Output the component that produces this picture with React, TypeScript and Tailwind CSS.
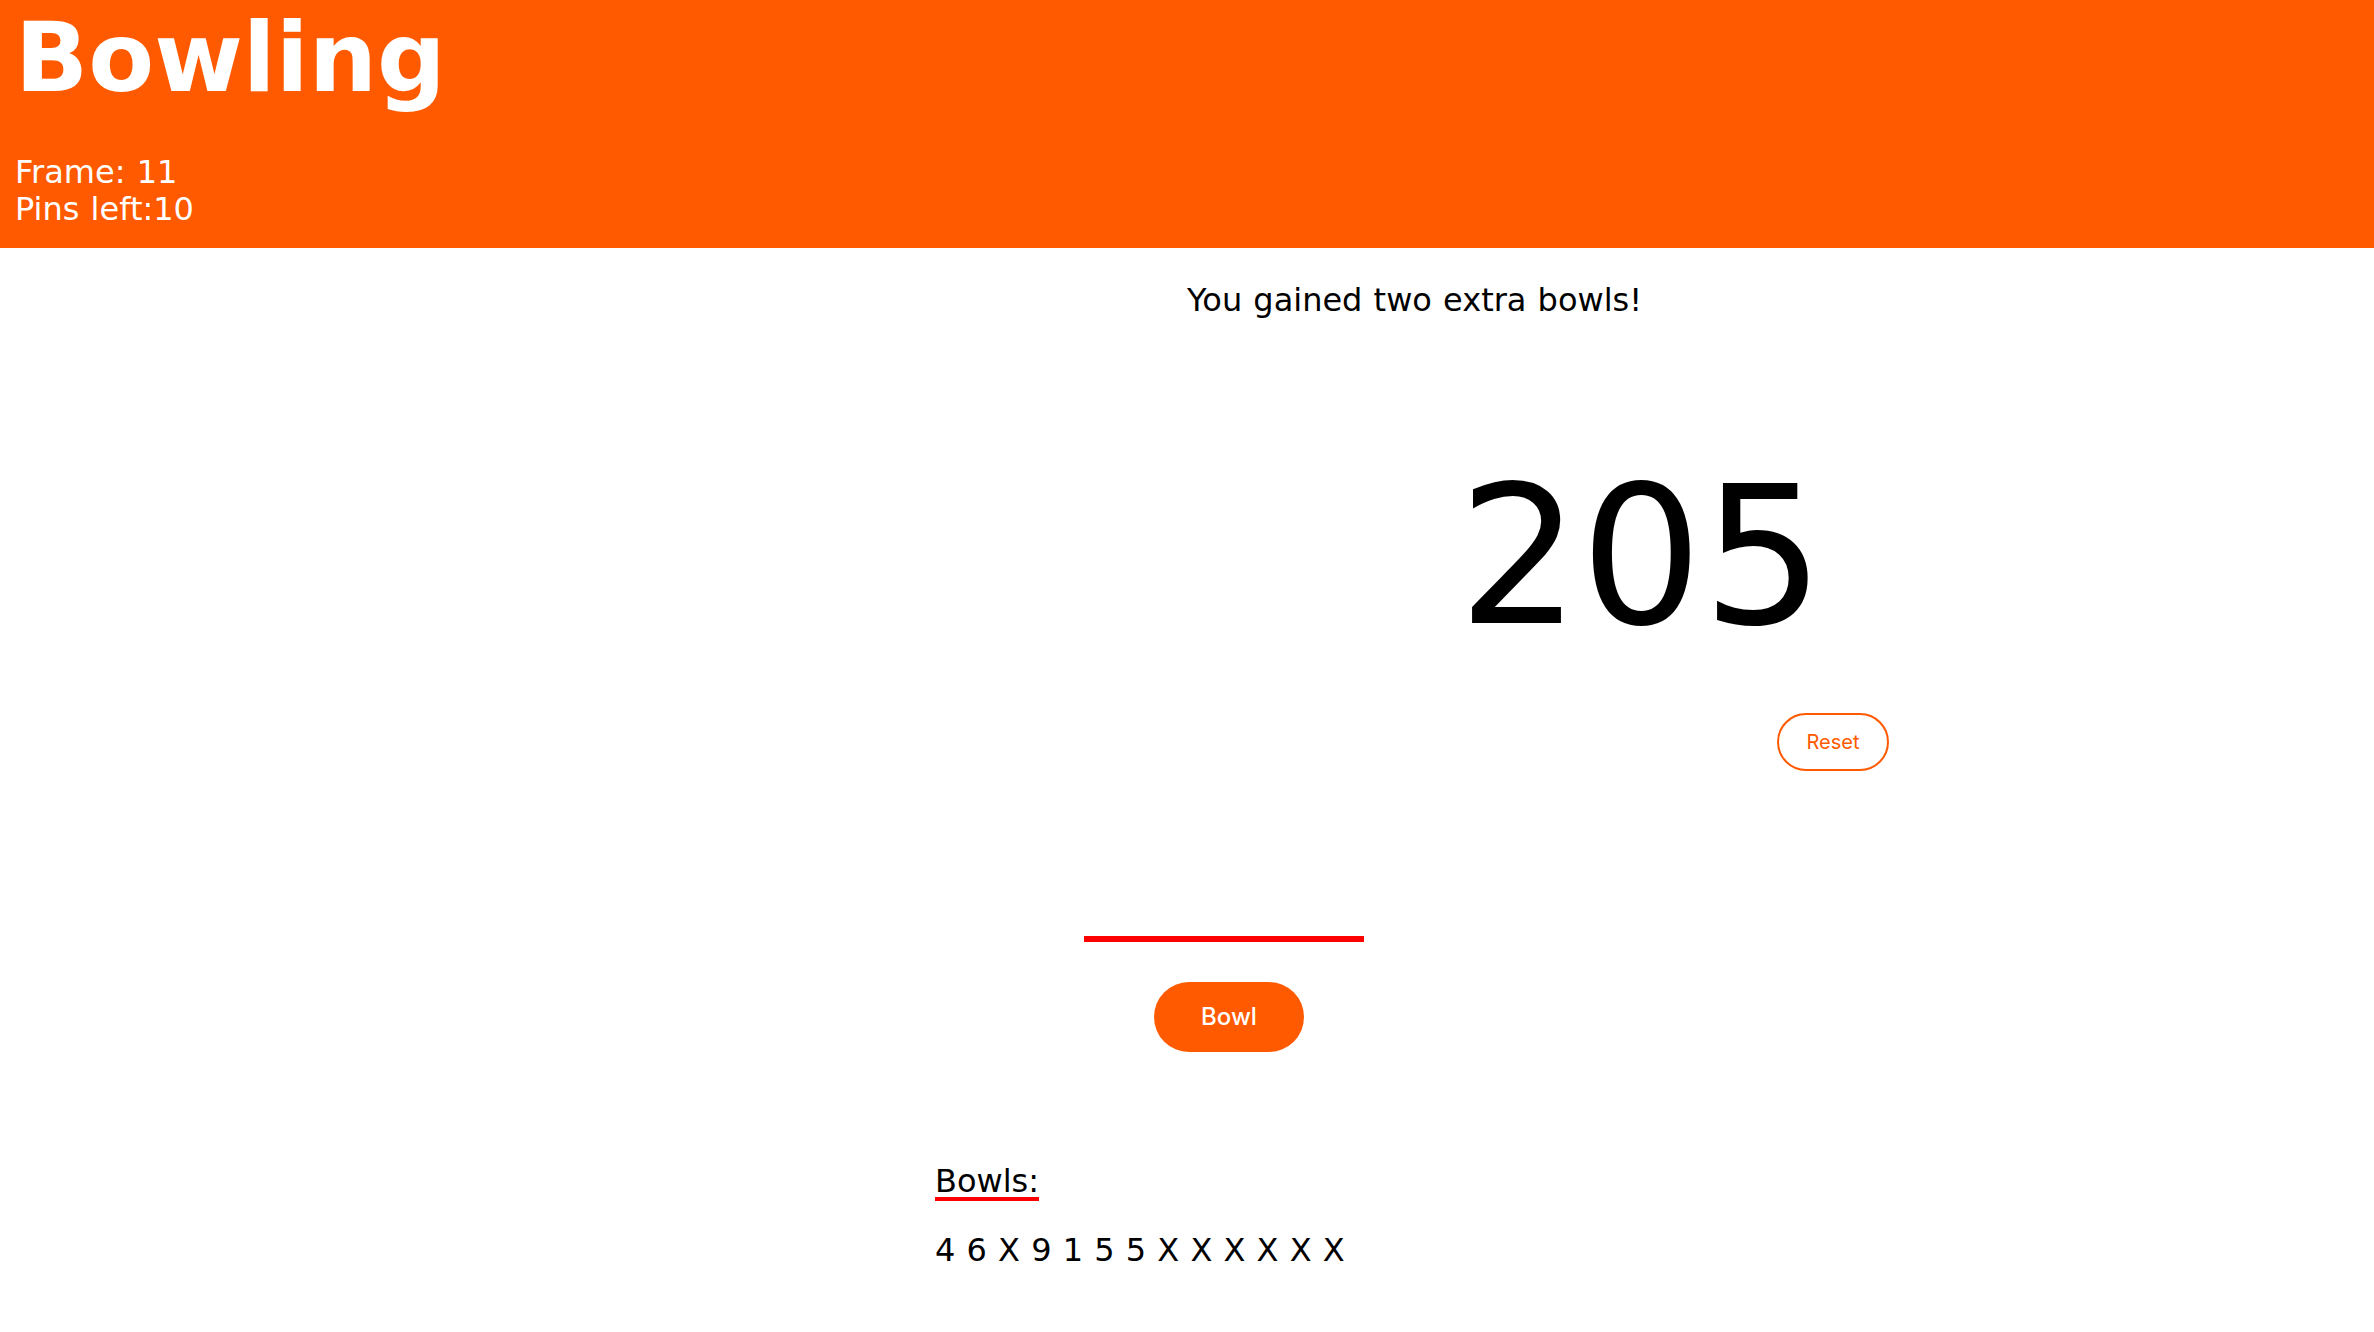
import React from "react";

const bowls = ["4", "6", "X", "9", "1", "5", "5", "X", "X", "X", "X", "X", "X"];

export default function App() {
    return (
        <div className="min-h-screen bg-white text-black font-['DejaVu_Sans',sans-serif]">
            {/* Header */}
            <header className="bg-[#ff5a00] px-[15px] pt-[2px] pb-[20px] text-white">
                <h1 className="text-[96px] font-bold leading-[112px]">Bowling</h1>
                <div className="mt-[40px] text-[32px] leading-[37px] [word-spacing:1px]">
                    <p>Frame: 11</p>
                    <p>Pins left:10</p>
                </div>
            </header>

            {/* Score area */}
            <div className="grid grid-cols-2">
                <div />
                <div className="flex flex-col items-start">
                    <p className="pt-[34px] text-[32px] leading-[37px] [word-spacing:1px]">You gained two extra bowls!</p>
                    <div className="ml-[271px] mt-[142px] text-[192px] leading-none">205</div>
                    <button className="ml-[590px] mt-[60px] flex h-[58px] w-[112px] items-center justify-center rounded-full border-2 border-[#ff5a00] bg-white font-['Inter',sans-serif] text-[20px] text-[#ff5a00]">
                        Reset
                    </button>
                </div>
            </div>

            {/* Lane + bowl */}
            <div className="flex flex-col items-start">
                <div className="ml-[1084px] mt-[165px] h-[6px] w-[280px] bg-[#ff0000]" />
                <button className="ml-[1154px] mt-[40px] flex h-[70px] w-[150px] items-center justify-center rounded-full bg-[#ff5a00] font-['Inter',sans-serif] text-[24px] font-medium text-white">
                    Bowl
                </button>

                {/* Bowls list */}
                <div className="ml-[935px] mt-[113px]">
                    <h2 className="inline-block border-b-4 border-[#ff0000] text-[32px] leading-none">Bowls:</h2>
                    <p className="mt-[31px] text-[32px] leading-[37px] [word-spacing:1px]">{bowls.join(" ")}</p>
                </div>
            </div>
        </div>
    );
}
